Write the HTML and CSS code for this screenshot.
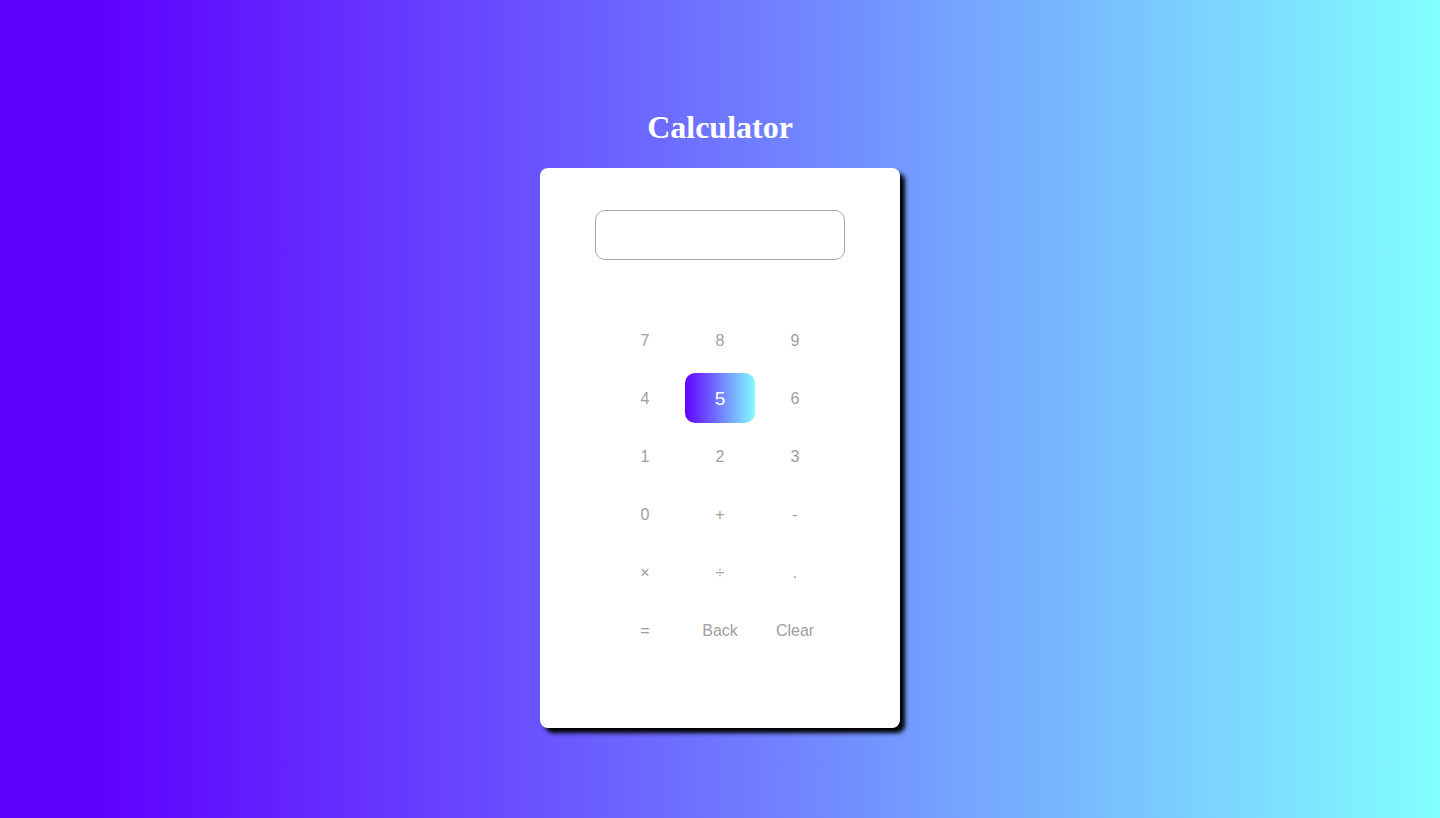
FILE: index.html
```html
<!DOCTYPE html>
<html lang="en">
<head>
<meta charset="utf-8">
<title>Calculator</title>
<link rel="stylesheet" href="styles.css">
</head>
<body>
  <h1 class="title">Calculator</h1>
  <div class="card">
    <input class="display" type="text">
    <div class="keys">
      <button class="key">7</button>
      <button class="key">8</button>
      <button class="key">9</button>
      <button class="key">4</button>
      <button class="key key-active">5</button>
      <button class="key">6</button>
      <button class="key">1</button>
      <button class="key">2</button>
      <button class="key">3</button>
      <button class="key">0</button>
      <button class="key">+</button>
      <button class="key">-</button>
      <button class="key">×</button>
      <button class="key">÷</button>
      <button class="key">.</button>
      <button class="key">=</button>
      <button class="key">Back</button>
      <button class="key">Clear</button>
    </div>
  </div>
</body>
</html>
```
FILE: styles.css
```css
html, body {
  margin: 0;
  padding: 0;
}
body {
  min-height: 818px;
  background: linear-gradient(90deg, #5f00ff 7%, #81ffff 100%);
  display: flex;
  flex-direction: column;
  align-items: center;
  padding-top: 109px;
  box-sizing: border-box;
}
.title {
  font-family: "Liberation Serif", "Times New Roman", serif;
  font-size: 32px;
  font-weight: bold;
  line-height: 37px;
  color: #fff;
  margin: 0 0 22px 0;
}
.card {
  width: 360px;
  height: 560px;
  background: #fff;
  border-radius: 8px;
  box-shadow: 5px 5px 4px #000;
  box-sizing: border-box;
  padding-top: 42px;
  display: flex;
  flex-direction: column;
  align-items: center;
}
.display {
  width: 250px;
  height: 50px;
  box-sizing: border-box;
  border: 1px solid #a8a8a8;
  border-radius: 10px;
  outline: none;
  background: #fff;
  margin: 0;
}
.keys {
  margin-top: 55px;
  display: grid;
  grid-template-columns: repeat(3, 70px);
  grid-auto-rows: 50px;
  column-gap: 5px;
  row-gap: 8px;
}
.key {
  border: none;
  background: transparent;
  border-radius: 10px;
  font-family: "Liberation Sans", Arial, sans-serif;
  font-size: 16px;
  color: #a0a0a0;
  padding: 2px 0 0 0;
  margin: 0;
}
.key-active {
  background: linear-gradient(90deg, #6100ff, #84fbff);
  color: #fff;
  font-size: 19px;
}
```
